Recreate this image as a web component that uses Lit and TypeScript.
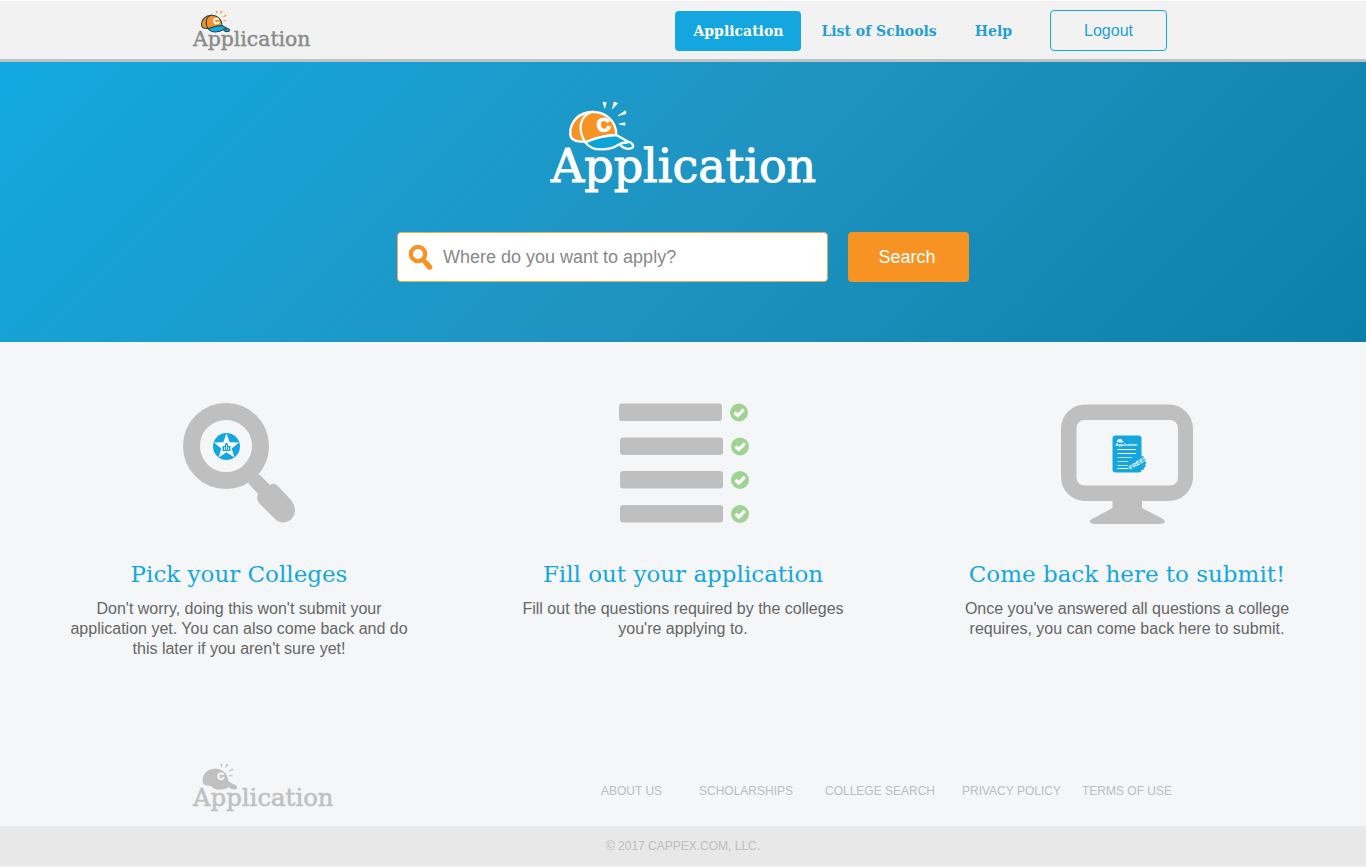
import { LitElement, html, css, svg } from "lit";
import { customElement, property } from "lit/decorators.js";

@customElement("brand-logo")
class BrandLogo extends LitElement {
  @property({ reflect: true }) tone = "hero";

  static styles = css`
    :host {
      display: block;
      --text: #fff;
      --line: #fff;
      --dome: #f69322;
      --brim: #0aa5d4;
      --letter: #fff;
      --ray: #fff;
    }
    :host([tone="color"]) {
      --text: #8a8a8a;
      --line: #1d4658;
      --brim: #16a8e0;
      --ray: #f69322;
    }
    :host([tone="muted"]) {
      --text: #c0c0c0;
      --line: #c0c0c0;
      --dome: #c0c0c0;
      --brim: #c0c0c0;
      --letter: #f4f6f8;
      --ray: #c0c0c0;
    }
    svg {
      display: block;
      width: 100%;
      overflow: visible;
    }
    .word {
      font-family: "DejaVu Serif", serif;
      font-size: 46px;
      fill: var(--text);
      stroke: var(--text);
      stroke-width: 1;
    }
    .dome {
      fill: var(--dome);
      stroke: var(--line);
    }
    .brim {
      fill: var(--brim);
      stroke: var(--line);
    }
    .letter {
      font: bold 56px "Liberation Sans Narrow", "Liberation Sans", sans-serif;
      fill: var(--letter);
      stroke: var(--letter);
      stroke-width: 4;
    }
    .rays {
      fill: var(--ray);
      stroke: var(--ray);
      stroke-width: 2;
    }
  `;

  render() {
    return html`
      <svg viewBox="0 0 264 92" role="img" aria-label="Application">
        <text class="word" x="0" y="82">Application</text>
        <g transform="translate(-11 -10) scale(.3333)" stroke-width="7" stroke-linejoin="round">
          <path class="dome" d="M160 66 C118 64 88 96 91 134 C93 153 112 156 134 155 Z" />
          <path class="dome" d="M136 157 C112 120 118 78 156 66 C198 64 230 95 229 135 C195 137 165 145 136 157 Z" />
          <path class="brim" d="M136 157 C165 144 200 136 229 135 L262 154 C278 157 284 168 276 174 C264 179 250 176 238 163 C212 181 158 188 136 157 Z" />
          <path class="brim" d="M238 163 Q250 156 264 158" />
          <text class="letter" x="170" y="125" transform="rotate(-8 186 105)">C</text>
          <path class="rays" d="M189 36 L199 38 L194 55 Z M222 36 L233 40 L217 57 Z M257 62 L258 71 L234 77 Z M255 98 L255 106 L237 102 Z" />
        </g>
      </svg>
    `;
  }
}

const searchArt = svg`
  <circle cx="57" cy="44" r="34.5" fill="none" stroke="#bfbfbf" stroke-width="17" />
  <path fill="#bfbfbf" d="M90 72 L101 83 Q105 80 109 84 L122 98 Q126 103 126 109 Q125 119 115 120.5 Q109 120.500 105 116 L90 101 Q87 97 89 92 L79 81 Z" />
  <circle cx="57.500" cy="44.500" r="13.500" fill="#14a7df" />
  <path fill="#fff" d="M57.500 31.500 L60.700 40.300 L70 40.600 L62.700 46.400 L65.400 55.500 L57.500 50.200 L49.600 55.500 L52.300 46.400 L45 40.600 L54.300 40.300 Z" />
  <path fill="#14a7df" d="M53.500 44 H56 V42 L57.500 40.500 L59 42 V44 H61.500 V49 H53.500 Z" />
  <path stroke="#fff" stroke-width=".8" d="M55.500 45 V48 M57.500 43 V48 M59.500 45 V48" />
`;

const row = (x: number, y: number) => svg`
  <g transform="translate(${x} ${y})">
    <rect width="103" height="17.500" rx="3" fill="#bfbfbf" />
    <circle cx="120" cy="9" r="9" fill="#a0d293" />
    <path d="M115.500 9 L118.800 12 L124.800 5.800" fill="none" stroke="#fff" stroke-width="3.200" />
  </g>
`;
const listArt = svg`${row(6, 1.5)}${row(7, 35.5)}${row(7, 69)}${row(7, 103)}`;

const seal = Array.from({ length: 32 }, (_, i) => {
  const r = i % 2 ? 8.2 : 9.6;
  const a = (i * Math.PI) / 16;
  return `${80 + r * Math.cos(a)},${61 + r * Math.sin(a)}`;
}).join(" ");

const screenArt = svg`
  <path fill="#bfbfbf" fill-rule="evenodd" d="M28 2.500 H112 A24 24 0 0 1 136 26.500 V75 A24 24 0 0 1 112 99 H28 A24 24 0 0 1 4 75 V26.500 A24 24 0 0 1 28 2.500 Z M27.500 18 A8 8 0 0 0 19.500 26 V75.500 A8 8 0 0 0 27.500 83.500 H113 A8 8 0 0 0 121 75.500 V26 A8 8 0 0 0 113 18 Z" />
  <path fill="#bfbfbf" d="M55.500 98 H85 V106 L106 117 Q109 119 107 121 Q106 122 103 122 H38 Q35 122 34 121 Q31 119 35 117 L55.500 106 Z" />
  <rect x="55.500" y="33.500" width="29" height="37" rx="3" fill="#14a7df" />
  <polygon points=${seal} fill="#14a7df" />
  <path fill="#fff" d="M60 40 Q60 37 63 37 Q65 37 65.500 39 L67 40 L64 40.500 Z" />
  <text x="58.500" y="43.500" class="tiny name">Application</text>
  <path stroke="#fff" d="M60.500 47.500 H79 M60.500 51.500 H79 M60.500 66.500 H72" />
  <path stroke="#c9d9de" d="M60.500 55.500 H75 M60.500 59.500 H71 M60.500 63.500 H71" />
  <text x="72.500" y="67.500" class="tiny" transform="rotate(-32 74 66)">FREE!</text>
`;

const features = [
  {
    art: searchArt,
    title: "Pick your Colleges",
    text: "Don't worry, doing this won't submit your application yet. You can also come back and do this later if you aren't sure yet!",
  },
  {
    art: listArt,
    title: "Fill out your application",
    text: "Fill out the questions required by the colleges you're applying to.",
  },
  {
    art: screenArt,
    title: "Come back here to submit!",
    text: "Once you've answered all questions a college requires, you can come back here to submit.",
  },
];

@customElement("app-root")
class AppRoot extends LitElement {
  static styles = css`
    :host {
      display: block;
      min-height: 100vh;
      background: #f4f6f8;
      font-family: "Liberation Sans", Arial, sans-serif;
      color: #666;
      --slab: "DejaVu Serif", serif;
      --blue: #14a7df;
      --orange: #f69322;
    }
    * {
      box-sizing: border-box;
    }
    a {
      text-decoration: none;
    }
    .wrap {
      width: 100%;
      max-width: 980px;
      margin: 0 auto;
      display: flex;
      justify-content: space-between;
      align-items: center;
    }
    .top {
      background: #f2f2f2;
      border-top: 1px solid #fafafa;
      border-bottom: 3px solid #bfc3c4;
      padding: 9px 0 8px;
    }
    .top .wrap {
      padding-right: 6px;
    }
    .top-logo {
      width: 117px;
    }
    .nav {
      display: flex;
      align-items: center;
      gap: 2px;
    }
    .nav a {
      font: bold 14px/40px var(--slab);
      color: #239fd3;
      padding: 0 18px;
      border-radius: 4px;
      white-space: nowrap;
    }
    .nav .current {
      background: var(--blue);
      color: #fff;
    }
    .logout {
      font: 16px "Liberation Sans", Arial, sans-serif;
      color: #239fd3;
      background: none;
      border: 1px solid var(--blue);
      border-radius: 4px;
      width: 117px;
      height: 41px;
      padding: 0;
      margin-left: 18px;
    }
    .hero {
      background: linear-gradient(135deg, #12a9e0 0%, #1f94c2 50%, #0c80a8 100%);
      padding: 38px 20px 60px;
      display: flex;
      flex-direction: column;
      align-items: center;
      gap: 40px;
    }
    .hero-logo {
      width: 264px;
    }
    .search {
      display: flex;
      justify-content: center;
      gap: 20px;
      width: 100%;
      height: 50px;
    }
    .field {
      display: flex;
      align-items: center;
      gap: 9px;
      width: 431px;
      padding-left: 10px;
      background: #fff;
      border: 1px solid #f2a950;
      border-radius: 4px;
    }
    .field svg {
      flex: none;
    }
    .field input {
      flex: 1;
      min-width: 0;
      height: 100%;
      border: 0;
      padding: 0;
      background: none;
      outline: none;
      font: 18px "Liberation Sans", Arial, sans-serif;
      color: #666;
    }
    .field input::placeholder {
      color: #888;
      opacity: 1;
    }
    .go {
      width: 121px;
      border: 0;
      border-radius: 4px;
      background: var(--orange);
      color: #fff;
      font: 18px "Liberation Sans", Arial, sans-serif;
      padding: 0 3px 0 0;
    }
    .features {
      display: grid;
      grid-template-columns: repeat(3, 1fr);
      padding: 60px 17px 87px;
    }
    .feature {
      display: flex;
      flex-direction: column;
      align-items: center;
      text-align: center;
    }
    .feature h2 {
      margin: 33px 0 10px;
      font: 23px/30px var(--slab);
      color: var(--blue);
    }
    .feature p {
      margin: 0;
      max-width: 360px;
      font-size: 16px;
      line-height: 20px;
    }
    .tiny {
      font: bold 6px "Liberation Sans", sans-serif;
      fill: #fff;
    }
    .name {
      font-size: 4px;
    }
    .foot {
      border-top: 1px solid #f8f8f8;
      padding: 16px 0 14px;
    }
    .foot-logo {
      width: 140px;
    }
    .links {
      display: grid;
      grid-template-columns: 98px 126px 137px 120px 91px;
      padding-top: 8px;
    }
    .links a {
      font-size: 12px;
      line-height: 16px;
      color: #bdbdbd;
      white-space: nowrap;
    }
    .copy {
      background: #e8e8e8;
      color: #bdbdbd;
      font-size: 12px;
      line-height: 40px;
      text-align: center;
    }
  `;

  render() {
    return html`
      <header class="top">
        <div class="wrap">
          <brand-logo class="top-logo" tone="color"></brand-logo>
          <nav class="nav">
            <a class="current" href="#application">Application</a>
            <a href="#schools">List of Schools</a>
            <a href="#help">Help</a>
            <button class="logout" type="button">Logout</button>
          </nav>
        </div>
      </header>
      <main>
        <section class="hero">
          <brand-logo class="hero-logo"></brand-logo>
          <form class="search" @submit=${(e: Event) => e.preventDefault()}>
            <label class="field">
              <svg width="26" height="28" viewBox="0 0 26 28" aria-hidden="true">
                <circle cx="10" cy="11" r="7.200" fill="none" stroke="#f69322" stroke-width="4.200" />
                <path d="M15 17 L18 20" stroke="#f69322" stroke-width="4" />
                <path d="M18.300 20.200 L21.500 24" stroke="#f69322" stroke-width="5.600" stroke-linecap="round" />
              </svg>
              <input type="text" aria-label="Where do you want to apply?" placeholder="Where do you want to apply?" />
            </label>
            <button class="go" type="submit">Search</button>
          </form>
        </section>
        <section class="features">
          ${features.map(
            (f) => html`
              <article class="feature">
                <svg width="140" height="124" viewBox="0 0 140 124" aria-hidden="true">${f.art}</svg>
                <h2>${f.title}</h2>
                <p>${f.text}</p>
              </article>
            `
          )}
        </section>
      </main>
      <footer>
        <div class="foot">
          <div class="wrap">
            <brand-logo class="foot-logo" tone="muted"></brand-logo>
            <nav class="links">
              <a href="#about">ABOUT US</a>
              <a href="#scholarships">SCHOLARSHIPS</a>
              <a href="#search">COLLEGE SEARCH</a>
              <a href="#privacy">PRIVACY POLICY</a>
              <a href="#terms">TERMS OF USE</a>
            </nav>
          </div>
        </div>
        <div class="copy">© 2017 CAPPEX.COM, LLC.</div>
      </footer>
    `;
  }
}
